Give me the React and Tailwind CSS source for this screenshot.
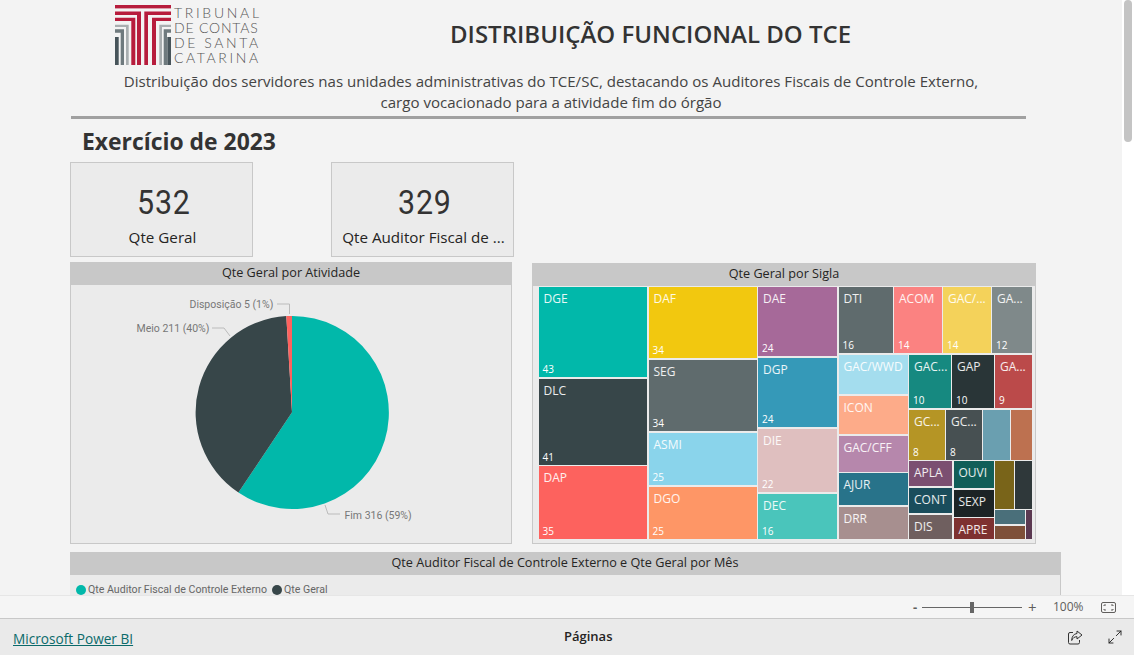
// App.jsx - Distribuição Funcional do TCE (relatório Power BI)
import { Maximize2 } from 'lucide-react'

const ff = "font-['Open_Sans','Liberation_Sans',sans-serif]"
const din = "font-['Roboto','Liberation_Sans',sans-serif]"

// ── Logo ───────────────────────────────────────────────
function LogoMarca() {
  return (
    <svg width="56" height="60" viewBox="0 0 56 60" className="shrink-0">
      <rect width="56" height="3.4" fill="#b71c3c" />
      {/* lado esquerdo */}
      <path d="M0 6.5H26V60H22V10H0z" fill="#b71c3c" />
      <path d="M0 12.7H20.3V60H16.3V16H0z" fill="#b71c3c" />
      <path d="M0 19.7H13.7V60H11V22H0z" fill="#a9aeb0" />
      <path d="M0 24.3H9V60H5.7V27.7H0z" fill="#6f7a7e" />
      <rect y="32" width="3.7" height="28" fill="#47545a" />
      {/* lado direito */}
      <path d="M56 6.5H29.3V60H33V10H56z" fill="#b71c3c" />
      <path d="M56 12.7H37V60H41V16H56z" fill="#b71c3c" />
      <path d="M56 19.7H44.3V60H47V22H56z" fill="#a9aeb0" />
      <path d="M56 24.3H48.7V60H52V27.7H56z" fill="#6f7a7e" />
      <rect x="52.3" y="32" width="3.7" height="28" fill="#47545a" />
    </svg>
  )
}

function Cabecalho() {
  return (
    <div className="flex h-[70px] items-start pt-[5px]">
      <div className="ml-[115px] flex items-start gap-[3px]">
        <LogoMarca />
        <div className="flex w-[85px] flex-col text-[14px] leading-[15px] font-light whitespace-nowrap text-[#555] font-['Lato',sans-serif]">
          <span className="tracking-[2.7px]">TRIBUNAL</span>
          <span className="tracking-[.8px]">DE CONTAS</span>
          <span className="tracking-[2.6px]">DE SANTA</span>
          <span className="tracking-[2.6px]">CATARINA</span>
        </div>
      </div>
      <h1 className={`mt-[12px] ml-[191px] text-[24px] leading-[34px] font-semibold whitespace-nowrap text-[#333] ${ff}`}>
        DISTRIBUIÇÃO FUNCIONAL DO TCE
      </h1>
    </div>
  )
}

// ── KPI ────────────────────────────────────────────────
function Cartao({ valor, rotulo, className }) {
  return (
    <div className={`flex h-[95px] w-[183px] flex-col items-center border border-[#c8c8c8] bg-[#ebebeb] ${className}`}>
      <div className={`mt-[20px] scale-x-[.92] pl-[5px] text-[33px] leading-[40px] tracking-[.8px] text-[#333] ${din}`}>{valor}</div>
      <div className={`mt-[4px] pl-[2px] text-[15.2px] leading-[20px] whitespace-nowrap text-[#252423] ${ff}`}>{rotulo}</div>
    </div>
  )
}

function TituloVisual({ children }) {
  return (
    <div className={`h-[23px] bg-[#c8c8c8] text-center text-[12.65px] leading-[21px] text-[#252423] ${ff}`}>{children}</div>
  )
}

// ── Pizza ──────────────────────────────────────────────
function Pizza() {
  const label = { fontSize: 10.5, fill: '#777', fontFamily: 'Roboto, sans-serif' }
  return (
    <svg width="440" height="258" viewBox="71 285 440 258" className="block">
      <path d="M292 412.3L292 316A96.5 96.5 0 1 1 238.4 492.5Z" fill="#01b8aa" />
      <path d="M292 412.3L238.4 492.5A96.5 96.5 0 0 1 286.3 316Z" fill="#374649" />
      <path d="M292 412.3L286.3 316A96.5 96.5 0 0 1 292 316Z" fill="#fd625e" />
      <path d="M277 304h12.5v10" fill="none" stroke="#bbb" />
      <path d="M212 328h12l6 8" fill="none" stroke="#bbb" />
      <path d="M325 505l3 9h12" fill="none" stroke="#bbb" />
      <text x="189.5" y="308" style={label}>Disposição 5 (1%)</text>
      <text x="136.5" y="332" style={label}>Meio 211 (40%)</text>
      <text x="344.5" y="519" style={label}>Fim 316 (59%)</text>
    </svg>
  )
}

// ── Treemap ────────────────────────────────────────────
function Celula({ cor, sigla, n, className }) {
  return (
    <div className={`relative overflow-hidden ${className}`} style={{ backgroundColor: cor }}>
      {sigla && <span className={`absolute top-[3px] left-[5px] text-[12px] leading-[18px] whitespace-nowrap text-white/90 ${ff}`}>{sigla}</span>}
      {n && <span className={`absolute bottom-[2px] left-[4px] text-[10px] leading-[12px] text-white ${ff}`}>{n}</span>}
    </div>
  )
}

function Treemap() {
  return (
    <div className="mt-[1px] ml-[5.5px] flex h-[252px] w-[494px] gap-[1.5px]">
      <div className="flex w-[108.5px] flex-col gap-[1.5px]">
        <Celula cor="#01b8aa" sigla="DGE" n="43" className="h-[90px]" />
        <Celula cor="#374649" sigla="DLC" n="41" className="h-[86px]" />
        <Celula cor="#fd625e" sigla="DAP" n="35" className="flex-1" />
      </div>
      <div className="flex w-[108px] flex-col gap-[1.5px]">
        <Celula cor="#f2c80f" sigla="DAF" n="34" className="h-[71px]" />
        <Celula cor="#5f6b6d" sigla="SEG" n="34" className="h-[71.5px]" />
        <Celula cor="#8ad4eb" sigla="ASMI" n="25" className="h-[52.5px]" />
        <Celula cor="#fe9666" sigla="DGO" n="25" className="flex-1" />
      </div>
      <div className="flex w-[79px] flex-col gap-[1.5px]">
        <Celula cor="#a66999" sigla="DAE" n="24" className="h-[69px]" />
        <Celula cor="#3599b8" sigla="DGP" n="24" className="h-[69.5px]" />
        <Celula cor="#dfbfbf" sigla="DIE" n="22" className="h-[63.5px]" />
        <Celula cor="#4ac5bb" sigla="DEC" n="16" className="flex-1" />
      </div>
      <div className="flex w-[193px] flex-col gap-[1.5px]">
        <div className="flex h-[66px] gap-[1.5px]">
          <Celula cor="#5f6b6d" sigla="DTI" n="16" className="w-[54px]" />
          <Celula cor="#fb8281" sigla="ACOM" n="14" className="w-[47.5px]" />
          <Celula cor="#f4d25a" sigla="GAC/..." n="14" className="w-[47.5px]" />
          <Celula cor="#7f898a" sigla="GA..." n="12" className="flex-1" />
        </div>
        <div className="flex flex-1 gap-[1.5px]">
          <div className="flex w-[69px] flex-col gap-[1.5px]">
            <Celula cor="#a4ddee" sigla="GAC/WWD" className="h-[39.5px]" />
            <Celula cor="#fdab89" sigla="ICON" className="h-[38.5px]" />
            <Celula cor="#b687ac" sigla="GAC/CFF" className="h-[36px]" />
            <Celula cor="#28738a" sigla="AJUR" className="h-[32px]" />
            <Celula cor="#a78f8f" sigla="DRR" className="flex-1" />
          </div>
          <div className="flex flex-1 flex-col gap-[1.5px]">
            <div className="flex h-[53.5px] gap-[1.5px]">
              <Celula cor="#168980" sigla="GAC..." n="10" className="w-[41.5px]" />
              <Celula cor="#293537" sigla="GAP" n="10" className="w-[41.5px]" />
              <Celula cor="#bb4a4a" sigla="GA..." n="9" className="flex-1" />
            </div>
            <div className="flex h-[50px] gap-[1.5px]">
              <Celula cor="#b59525" sigla="GC..." n="8" className="w-[35.5px]" />
              <Celula cor="#475052" sigla="GC..." n="8" className="w-[35.5px]" />
              <Celula cor="#6a9fb0" className="w-[26.5px]" />
              <Celula cor="#bd7150" className="flex-1" />
            </div>
            <div className="flex flex-1 gap-[1.5px]">
              <div className="flex w-[43px] flex-col gap-[1.5px]">
                <Celula cor="#7b4f71" sigla="APLA" className="h-[25px]" />
                <Celula cor="#1a4d5c" sigla="CONT" className="h-[25.5px]" />
                <Celula cor="#6f5f5f" sigla="DIS" className="flex-1" />
              </div>
              <div className="flex w-[40px] flex-col gap-[1.5px]">
                <Celula cor="#115e58" sigla="OUVI" className="h-[27px]" />
                <Celula cor="#1c2325" sigla="SEXP" className="h-[27px]" />
                <Celula cor="#7e3130" sigla="APRE" className="flex-1" />
              </div>
              <div className="flex flex-1 flex-col gap-[1.5px]">
                <div className="flex h-[47.5px] gap-[1.5px]">
                  <Celula cor="#796419" className="w-[18.5px]" />
                  <Celula cor="#2f383a" className="flex-1" />
                </div>
                <div className="flex flex-1 gap-[1.5px]">
                  <div className="flex w-[29.5px] flex-col gap-[1.5px]">
                    <Celula cor="#4a6f7a" className="h-[14px]" />
                    <Celula cor="#7e5039" className="flex-1" />
                  </div>
                  <Celula cor="#5b3951" className="flex-1" />
                </div>
              </div>
            </div>
          </div>
        </div>
      </div>
    </div>
  )
}

// ── Barra de zoom e rodapé ─────────────────────────────
function BarraZoom() {
  return (
    <div className="flex h-[23px] shrink-0 items-center border-t border-[#e6e6e6] bg-[#f5f5f5] text-[#605e5c]">
      <span className={`ml-[913px] w-[9px] text-[13px] font-bold leading-none ${ff}`}>-</span>
      <div className="relative h-[1px] w-[100px] bg-[#666]">
        <span className="absolute top-[-5px] left-[48px] h-[11px] w-[4px] bg-[#666]" />
      </div>
      <span className={`ml-[6px] w-[12px] text-[15px] leading-none ${ff}`}>+</span>
      <span className={`ml-[13px] w-[30px] text-[12px] leading-none ${ff}`}>100%</span>
      <svg width="15" height="11" viewBox="0 0 15 11" className="ml-[18px]" fill="none" stroke="#605e5c">
        <rect x="0.5" y="0.5" width="14" height="10" rx="1.5" />
        <path d="M3 4V3h2M12 4V3h-2M3 7v1h2M12 7v1h-2" />
      </svg>
    </div>
  )
}

function IconeCompartilhar() {
  return (
    <svg width="15" height="15" viewBox="0 0 15 15" fill="none" stroke="#333" strokeWidth="1" className="ml-[454px] shrink-0">
      <path d="M5 2.5H2a1.5 1.5 0 0 0-1.5 1.5v8.5A1.5 1.5 0 0 0 2 14h8a1.5 1.5 0 0 0 1.5-1.5V10" />
      <path d="M9 1l5 4-5 4V6.700C6.500 6.700 4.700 7.800 3.700 10.500c0-4 2-6.600 5.300-7z" />
    </svg>
  )
}

function Rodape() {
  return (
    <div className="flex h-[37px] shrink-0 items-center border-t border-[#c8c8c8] bg-[#eaeaea]">
      <a className={`mt-[3px] ml-[13px] w-[120px] text-[13.65px] leading-none font-medium whitespace-nowrap text-[#0b6a6a] underline ${ff}`}>Microsoft Power BI</a>
      <span className={`ml-[431px] w-[50px] text-[13px] font-semibold text-[#252423] ${ff}`}>Páginas</span>
      <IconeCompartilhar />
      <Maximize2 size={16} strokeWidth={1.4} className="ml-[24px] shrink-0 text-[#222]" />
    </div>
  )
}

export default function App() {
  return (
    <div className="flex h-[655px] w-[1134px] flex-col overflow-hidden bg-[#f3f3f3]">
      <div className="flex min-h-0 flex-1">
        <main className="w-[1122px] overflow-hidden">
          <Cabecalho />
          <p className={`ml-[71px] w-[960px] pt-[1px] text-center text-[15.07px] leading-[21px] text-[#444] ${ff}`}>
            Distribuição dos servidores nas unidades administrativas do TCE/SC, destacando os Auditores Fiscais de Controle Externo,<br />
            cargo vocacionado para a atividade fim do órgão
          </p>
          <div className="mt-[3px] ml-[71px] h-[3px] w-[955px] bg-[#a0a0a0]" />
          <h2 className={`mt-[7px] ml-[82px] text-[22.9px] leading-[32px] font-bold text-[#333] ${ff}`}>Exercício de 2023</h2>
          <div className="mt-[4px] ml-[70px] flex">
            <Cartao valor="532" rotulo="Qte Geral" />
            <Cartao valor="329" rotulo="Qte Auditor Fiscal de ..." className="ml-[78px]" />
          </div>
          <div className="mt-[5px] ml-[70px] flex items-start">
            <section className="h-[282px] w-[442px] border-x border-b border-[#c8c8c8] bg-[#ebebeb]">
              <TituloVisual>Qte Geral por Atividade</TituloVisual>
              <Pizza />
            </section>
            <section className="mt-[1px] ml-[20px] h-[281px] w-[504px] border-x border-b border-[#c8c8c8] bg-[#ebebeb]">
              <TituloVisual>Qte Geral por Sigla</TituloVisual>
              <Treemap />
            </section>
          </div>
          <section className="mt-[8px] ml-[70px] w-[991px] border-r border-[#c8c8c8] bg-[#ebebeb] pb-[30px]">
            <TituloVisual>Qte Auditor Fiscal de Controle Externo e Qte Geral por Mês</TituloVisual>
            <div className={`mt-[7px] ml-[6px] flex items-center pt-[1px] text-[10.6px] leading-[14px] text-[#666] ${din}`}>
              <span className="mr-[2px] h-[10px] w-[10px] rounded-full bg-[#01b8aa]" />
              Qte Auditor Fiscal de Controle Externo
              <span className="mr-[1px] ml-[5px] h-[10px] w-[10px] rounded-full bg-[#374649]" />
              <span className="pl-[1px]">Qte Geral</span>
            </div>
          </section>
        </main>
        <aside className="flex-1 bg-white pl-[2px]">
          <div className="h-[142px] w-[8px] rounded-full bg-[#c4c4c4]" />
        </aside>
      </div>
      <BarraZoom />
      <Rodape />
    </div>
  )
}
